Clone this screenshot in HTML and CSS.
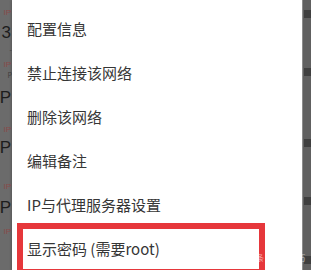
FILE: index.html
```html
<!DOCTYPE html>
<html lang="zh-CN">
<head>
<meta charset="UTF-8">
<meta name="viewport" content="width=device-width, initial-scale=1.0">
<title>WLAN 菜单</title>
<link rel="stylesheet" href="styles.css">
</head>
<body>

<div class="screen">
    <!-- 背景：被遮罩的 WLAN 列表 -->
    <div class="bg-left">
        <span class="ip" style="margin-top: 9px">IP</span>
        <span class="name" style="margin-top: 7px">3</span>
        <span class="sub" style="margin-top: 5px">-</span>
        <span class="ip" style="margin-top: 8px">IP</span>
        <span class="sub" style="margin-top: 3px">P</span>
        <span class="name" style="margin-top: 10px">P</span>
        <span class="ip" style="margin-top: 20px">IP</span>
        <span class="name" style="margin-top: 5px">P</span>
        <span class="ip" style="margin-top: 27px">IP</span>
        <span class="name" style="margin-top: 8px">P</span>
        <span class="ip" style="margin-top: 12px">IP</span>
    </div>

    <!-- 长按菜单 -->
    <div class="menu">
        <div class="menu-item">配置信息</div>
        <div class="menu-item">禁止连接该网络</div>
        <div class="menu-item">删除该网络</div>
        <div class="menu-item">编辑备注</div>
        <div class="menu-item">IP与代理服务器设置</div>
        <div class="menu-item marked">显示密码 (需要root)</div>
    </div>

    <div class="bg-right">
        <span class="mark" style="margin-top: 10px"></span>
        <span class="mark" style="margin-top: 50px"></span>
        <span class="mark" style="margin-top: 63px"></span>
        <span class="mark" style="margin-top: 50px"></span>
        <span class="mark" style="margin-top: 51px"></span>
    </div>

    <div class="watermark">头条 @玩机技巧</div>
</div>

</body>
</html>
```

FILE: styles.css
```css
body {
    margin: 0;
    font-family: "Noto Sans CJK SC", "Noto Sans", sans-serif;
    background-color: #676767;
}
.screen {
    position: relative;
    display: flex;
    width: 311px;
    height: 270px;
    overflow: hidden;
    background-color: #676767;
}
.bg-left {
    display: flex;
    flex-direction: column;
    align-items: flex-end;
    width: 12px;
    flex-shrink: 0;
    overflow: hidden;
    background-color: #6b6b6b;
}
.bg-left span {
    display: block;
    line-height: 1;
}
.bg-left .ip {
    font-size: 8px;
    color: #8a4a4a;
    font-family: "Liberation Sans", sans-serif;
    margin-right: 1px;
}
.bg-left .name {
    font-size: 17px;
    color: #1d1d1d;
    font-family: "Liberation Sans", sans-serif;
    margin-right: 1px;
}
.bg-left .sub {
    font-size: 7px;
    color: #3e3e3e;
}
.menu {
    width: 290px;
    flex-shrink: 0;
    padding-top: 7px;
    background-color: #fff;
    box-shadow: 0 0 3px rgba(0, 0, 0, 0.3);
}
.menu-item {
    position: relative;
    height: 44px;
    line-height: 44px;
    padding-left: 15px;
    font-size: 15px;
    color: #363636;
}
/* 红框标注 */
.menu-item.marked::after {
    content: "";
    position: absolute;
    left: 5px;
    top: -4px;
    width: 236px;
    height: 40px;
    border: 6px solid #e6373b;
}
.bg-right {
    display: flex;
    flex-direction: column;
    flex: 1;
    border-left: 1px solid #8c8c8c;
    background-color: #606060;
}
.mark {
    display: block;
    width: 9px;
    height: 8px;
    margin-left: 1px;
    background-color: #3f3f3f;
}
.watermark {
    position: absolute;
    left: 248px;
    top: 253px;
    font-size: 8px;
    line-height: 10px;
    color: rgba(255, 255, 255, 0.6);
    white-space: nowrap;
}
```
